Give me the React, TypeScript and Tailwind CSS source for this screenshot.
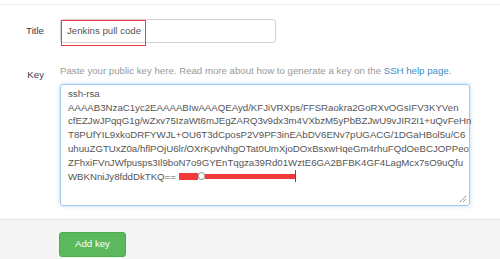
import React from "react";

const KEY_LINES = [
  "ssh-rsa",
  "AAAAB3NzaC1yc2EAAAABIwAAAQEAyd/KFJiVRXps/FFSRaokra2GoRXvOGsIFV3KYVen",
  "cfEZJwJPqqG1g/wZxv75IzaWt6mJEgZARQ3v9dx3m4VXbzM5yPbBZJwU9vJIR2I1+uQvFeHn",
  "T8PUfYIL9xkoDRFYWJL+OU6T3dCposP2V9PF3inEAbDV6ENv7pUGACG/1DGaHBol5u/C6",
  "uhuuZGTUxZ0a/hflPOjU6lr/OXrKpvNhgOTat0UmXjoDOxBsxwHqeGm4rhuFQdOeBCJOPPeo",
  "ZFhxiFVnJWfpusps3Il9boN7o9GYEnTqgza39Rd01WztE6GA2BFBK4GF4LagMcx7sO9uQfu",
];

function ResizeGrip() {
  return (
    <svg width="9" height="9" viewBox="0 0 9 9" className="absolute bottom-[2px] right-[2px]">
      <path d="M8 2 L2 8 M8 5 L5 8" stroke="#9a9a9a" strokeWidth="1" />
    </svg>
  );
}

export default function App() {
  return (
    <div
      className="h-[259px] w-[500px] overflow-hidden bg-white text-[9.66px] leading-[13.8px] text-[#555]"
      style={{ fontFamily: '"Liberation Sans", Arial, sans-serif' }}
    >
      <div className="h-[5px] border-b border-[#efefef]" />

      <div className="flex flex-col pt-[14px]">
        {/* Title row */}
        <div className="flex items-center">
          <label className="w-[44px] text-right text-[#3d3a45]">Title</label>
          <div className="relative ml-[16px]">
            <div className="flex h-[24px] w-[216px] items-center rounded-[3px] border border-[#d2d2d2] px-[6px]">
              Jenkins pull code
            </div>
            <div className="absolute left-[1px] top-[1px] h-[26px] w-[85px] border border-[#ee3b45]" />
          </div>
        </div>

        {/* Key row */}
        <div className="mt-[21px] flex items-start">
          <label className="w-[44px] pt-[4px] text-right text-[#3d3a45]">Key</label>
          <div className="ml-[16px] flex flex-col">
            <p className="text-[#999]">
              Paste your public key here. Read more about how to generate a key on the{" "}
              <span className="text-[#428bca]">SSH help page</span>.
            </p>
            <div className="relative mt-[6px] h-[122px] w-[410px] rounded-[3px] border border-[#9fc9ee] px-[7px] pt-[2px] shadow-[0_0_4px_rgba(102,175,233,0.45)]">
              {KEY_LINES.map((line) => (
                <div key={line} className="whitespace-pre">
                  {line}
                </div>
              ))}
              <div className="flex items-center whitespace-pre">
                <span>WBKNniJy8fddDkTKQ== </span>
                <span className="inline-block h-[7px] w-[19px] bg-[#f23a3a]" />
                <span className="inline-block h-[8px] w-[7px] rounded-full border border-[#888]" />
                <span className="inline-block h-[5px] w-[90px] bg-[#f23a3a]" />
                <span className="inline-block h-[12px] w-px bg-[#555]" />
              </div>
              <ResizeGrip />
            </div>
          </div>
        </div>
      </div>

      {/* Footer */}
      <div className="mt-[13px] h-[60px] border-t border-[#e6e6e6] bg-[#f5f5f5] pl-[59px] pt-[12px]">
        <button className="flex h-[25px] w-[67px] items-center justify-center rounded-[3px] border border-[#4cae4c] bg-[#5cb85c] text-white">
          Add key
        </button>
      </div>
    </div>
  );
}
